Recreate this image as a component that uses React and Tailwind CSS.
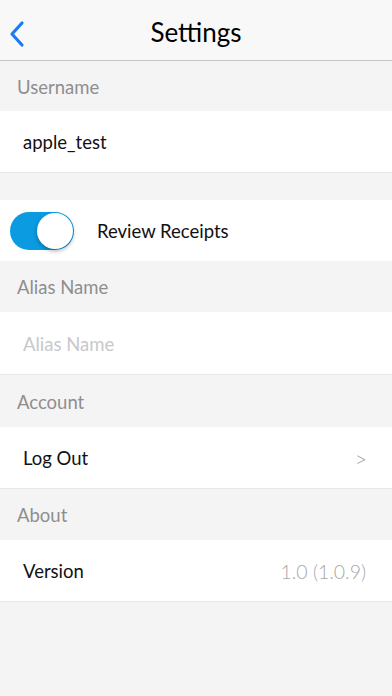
import React from "react";

const font = { fontFamily: "Lato, 'Open Sans', sans-serif" };

function Header({ children, h = "h-[51px]" }) {
  return (
    <div className={h + " shrink-0 flex items-center pl-[17px] pt-[3px] text-[18.5px] text-[#8e8e8e]"}>
      {children}
    </div>
  );
}

function Row({ children, className = "", h = "h-[62px]" }) {
  return (
    <div className={h + " shrink-0 bg-white border-b border-[#e8e8e8] flex items-center px-[23px] pt-[3px] text-[18.5px] text-[#111] " + className}>
      {children}
    </div>
  );
}

export default function App() {
  return (
    <div className="w-[392px] h-[696px] bg-[#f4f4f4] flex flex-col" style={font}>
      <div className="h-[61px] shrink-0 bg-[#f8f8f8] border-b border-[#c4c4c4] relative flex items-center justify-center">
        <svg className="absolute left-[8px] top-[20px]" width="18" height="28" viewBox="0 0 18 28">
          <path d="M14 3 L4 14 L14 25" fill="none" stroke="#1a7cf5" strokeWidth="3.2" strokeLinecap="round" strokeLinejoin="round" />
        </svg>
        <span className="text-[26px] text-black mt-[5px]">Settings</span>
      </div>
      <Header h="h-[50px]">Username</Header>
      <Row>apple_test</Row>
      <div className="h-[27px] shrink-0" />
      <div className="h-[61px] shrink-0 bg-white flex items-center">
        <div className="ml-[10px] w-[64px] h-[38px] rounded-full bg-[#0b9be0] relative">
          <div className="absolute right-[1px] top-[1px] w-[36px] h-[36px] rounded-full bg-white shadow-[0_2px_4px_rgba(0,0,0,0.3)]" />
        </div>
        <span className="ml-[23px] pt-[2px] text-[18.5px] text-[#111]">Review Receipts</span>
      </div>
      <Header>Alias Name</Header>
      <Row h="h-[63px]" className="text-[#c8c8cc]">Alias Name</Row>
      <Header h="h-[52px]">Account</Header>
      <Row className="justify-between">
        <span>Log Out</span>
        <span className="text-[#a0a0a0] text-[21px] font-light mr-[2px]">&gt;</span>
      </Row>
      <Header>About</Header>
      <Row className="justify-between">
        <span>Version</span>
        <span className="text-[#a8a8a8] text-[19.5px] font-light mr-[3px]">1.0 (1.0.9)</span>
      </Row>
    </div>
  );
}
